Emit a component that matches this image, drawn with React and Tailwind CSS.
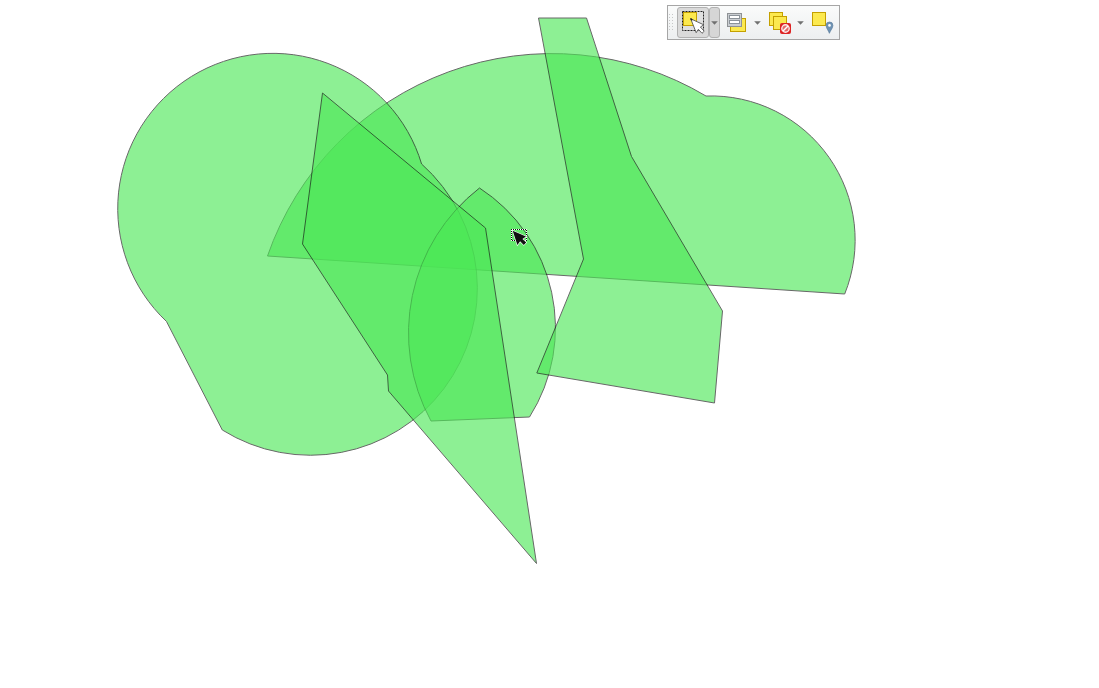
import React from "react";

const shapes = [
  "M267.5 256A301 301 0 0 1 706 96A144.2 144.2 0 0 1 844.7 294Z",
  "M166.5 321.5A155.2 155.2 0 1 1 421.6 164A166.8 166.8 0 0 1 222.3 430Z",
  "M479.5 188A166.5 166.5 0 0 1 529.5 417L431 421A183.5 183.5 0 0 1 479.5 188Z",
  "M322.5 93L485.5 228L536.5 563.5L388.5 391L387.5 375L302.5 244Z",
  "M538.5 18H586.5L631.5 156.5L722.5 311L714.5 403L536.8 373L583.5 259Z",
];

function Square({ x, y, w = 13, h = 13 }) {
  return <rect x={x} y={y} width={w} height={h} fill="#fce94f" stroke="#c4a000" />;
}

function Icon({ children }) {
  return (
    <svg className="block h-6 w-6 shrink-0" viewBox="0 0 24 24">
      {children}
    </svg>
  );
}

function SelectIcon() {
  return (
    <Icon>
      <rect x="1.5" y="1.5" width="21" height="19" fill="#e0e0e0" />
      <Square x={2.5} y={2.5} />
      <rect x="1.5" y="1.5" width="21" height="19" fill="none" stroke="#222" strokeDasharray="2 1" />
      <path d="M9.7 8.8L22.8 14.8L19.4 17L23.2 21.2L21 23.3L17.4 19.3L15.2 22.7Z" fill="#fff" stroke="#555" strokeWidth=".9" />
      <path d="M9.5 8.5l1.8 1.8" stroke="#222" strokeWidth="1.3" />
    </Icon>
  );
}

function FormIcon() {
  return (
    <Icon>
      <Square x={5.5} y={8.5} w={15} h={13} />
      <rect x="2.5" y="3.5" width="14" height="13" fill="#c9cdd1" stroke="#8f9295" />
      <rect x="4.5" y="5.5" width="10" height="3" fill="#fff" stroke="#8b9299" />
      <rect x="4.5" y="10.5" width="10" height="3" fill="#fff" stroke="#8b9299" />
    </Icon>
  );
}

function DeselectIcon() {
  return (
    <Icon>
      <Square x={2.5} y={2.5} />
      <Square x={6.5} y={6.5} />
      <rect x="13" y="13" width="11" height="11" rx="2" fill="#dd2424" />
      <circle cx="18.5" cy="18.5" r="3.7" fill="#e46a6a" stroke="#fbe9e9" strokeWidth="1.4" />
      <path d="M16 21l5-5" stroke="#fff" strokeWidth="1.5" />
    </Icon>
  );
}

function LocationIcon() {
  return (
    <Icon>
      <Square x={2.5} y={2.5} />
      <path d="M19.4 23.3C18.6 20.5 16.1 18.4 16.1 15.4a3.4 3.4 0 0 1 6.8 0C22.9 18.4 20.2 20.5 19.4 23.3Z" fill="#6f93b4" stroke="#5b7d9c" strokeWidth=".7" />
      <circle cx="19.5" cy="15.4" r="1.3" fill="#fff" />
    </Icon>
  );
}

function Caret() {
  return (
    <svg className="block h-1 w-[7px] shrink-0" viewBox="0 0 7 4">
      <path d="M.2 .3H6.8L3.5 3.8Z" fill="#707070" />
    </svg>
  );
}

function Toolbar() {
  return (
    <div className="absolute top-[5px] left-[667px] flex h-[35px] w-[173px] items-start border border-[#a6a6a6] bg-linear-to-b from-[#fafbfb] to-[#edeff0] pt-px">
      <svg className="mt-[7px] block h-4 w-[9px] shrink-0" viewBox="0 0 9 16">
        <g fill="#c6c7c8">
          {[0, 3, 6, 9, 12, 15].map((y) => (
            <React.Fragment key={y}>
              <rect x="1" y={y} width="1" height="1" />
              <rect x="4" y={y} width="1" height="1" />
            </React.Fragment>
          ))}
        </g>
      </svg>
      <button className="flex h-[31px] w-8 shrink-0 items-start justify-center rounded-[3px] border border-[#b1b1b1] bg-[#dadada] pt-[2px]">
        <SelectIcon />
      </button>
      <button className="flex h-[31px] w-[11px] shrink-0 items-start justify-center rounded-[3px] border border-[#b1b1b1] bg-[#d6d6d6] pt-[13px]">
        <Caret />
      </button>
      <button className="mt-[3px] ml-[5px] shrink-0"><FormIcon /></button>
      <button className="mt-[14px] ml-[5px] shrink-0"><Caret /></button>
      <button className="mt-[3px] ml-[6px] shrink-0"><DeselectIcon /></button>
      <button className="mt-[14px] ml-[6px] shrink-0"><Caret /></button>
      <button className="mt-[3px] ml-[6px] shrink-0"><LocationIcon /></button>
    </div>
  );
}

export default function App() {
  return (
    <main className="relative h-[688px] w-[1099px] overflow-hidden bg-white">
      <svg className="block h-[688px] w-[1099px]" viewBox="0 0 1099 688">
        {shapes.map((d) => (
          <path key={d} d={d} fill="#4ce856" stroke="#101010" strokeWidth="1" strokeLinejoin="bevel" opacity=".63" />
        ))}
        <g>
          <rect x="511.5" y="229.5" width="15" height="11" fill="none" stroke="#fff" />
          <rect x="511.5" y="229.5" width="15" height="11" fill="none" stroke="#111" strokeDasharray="1 1" strokeDashoffset=".5" shapeRendering="crispEdges" />
          <path d="M512.7 230.8L526 236.6L522.4 238.9L526.2 242.6L523.8 245L520.1 241.3L517.4 245Z" fill="#111" stroke="#fff" strokeWidth="1.2" paintOrder="stroke" />
        </g>
      </svg>
      <Toolbar />
    </main>
  );
}
